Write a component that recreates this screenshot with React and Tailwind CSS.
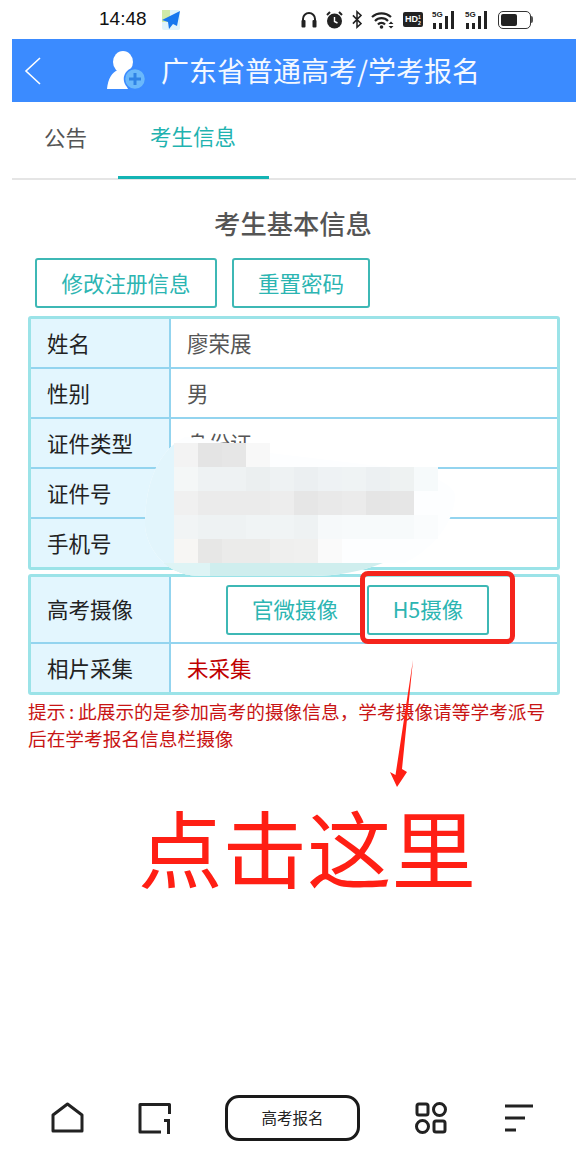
import React from "react";

const infoRows = [
  { label: "姓名", value: "廖荣展" },
  { label: "性别", value: "男" },
  { label: "证件类型", value: "身份证" },
  { label: "证件号", value: "" },
  { label: "手机号", value: "" },
];

const tip = "提示\u2009:\u2009此展示的是参加高考的摄像信息\uFF0C学考摄像请等学考派号后在学考报名信息栏摄像";

// mosaic cells of the censored area, 24px each, 11 columns
const mosaic = [
  ["bg-[#f3f3f3]", "bg-[#e4e4e4]", "bg-[#e6e6e6]", "bg-[#f8f8f8]", "", "", "", "", "", "", ""],
  ["bg-[#f4f7f7]", "bg-[#eef2f3]", "bg-[#eef2f3]", "bg-[#ebeff0]", "bg-[#eef2f3]", "bg-[#ebeff1]", "bg-[#eef2f4]", "bg-[#eff3f4]", "bg-[#ecf0f2]", "bg-[#eef2f2]", "bg-[#f6fafb]"],
  ["bg-[#f0f0f0]", "bg-[#ebebeb]", "bg-[#ebebeb]", "bg-[#ebebeb]", "bg-[#ededed]", "bg-[#e6e6e6]", "bg-[#e9e9e9]", "bg-[#ebebeb]", "bg-[#e5e5e5]", "bg-[#e6e6e6]", ""],
  ["bg-[#f1f4f5]", "bg-[#eef2f3]", "bg-[#eef2f3]", "bg-[#f0f4f5]", "bg-[#f0f4f5]", "bg-[#eef2f3]", "bg-[#f6f9fa]", "bg-[#f7fafb]", "bg-[#f7fafb]", "bg-[#f7fafb]", "bg-[#fafcfd]"],
  ["bg-[#f7f6f4]", "bg-[#e7e7e6]", "bg-[#ebebea]", "bg-[#ebebea]", "bg-[#efefee]", "bg-[#f0f0ef]", "bg-[#fafafa]", "", "", "", ""],
];

const font = "font-['Noto_Sans_CJK_SC','Noto_Sans',sans-serif]";

function Row({ label, children, className = "h-[50px]", last }) {
  return (
    <div className={`flex ${className} ${last ? "" : "border-b-2 border-[#93d4ef]"}`}>
      <div className="w-[140px] shrink-0 flex items-center pl-[16px] bg-[#e3f6fe] border-r-2 border-[#93d4ef] text-[#222] text-[21.5px]">
        {label}
      </div>
      <div className="flex-1 flex items-center pl-[16px] text-[#555] text-[21.5px]">{children}</div>
    </div>
  );
}

function StatusBar() {
  return (
    <div className="h-[39px] shrink-0 flex items-center pl-[99px] pr-[51px]">
      <span className="font-['Liberation_Sans',sans-serif] text-[19px] text-[#111]">14:48</span>
      <svg className="ml-[14px]" width="20" height="22" viewBox="0 0 20 22">
        <rect x="1" y="1" width="18" height="20" rx="2" fill="#dff3fb" />
        <rect x="1" y="1" width="8" height="12" fill="#cfeaa8" />
        <path d="M19 2 1 11l6 2 1 7 4-5 4 2z" fill="#1677ee" />
      </svg>
      <div className="ml-auto flex items-center gap-[9px] text-[#222]">
        <svg width="16" height="17" viewBox="0 0 16 17" fill="none" stroke="#222" strokeWidth="2">
          <path d="M2 13V8a6 6 0 0 1 12 0v5" />
          <rect x="0.500" y="9" width="4" height="7.500" rx="1" fill="#222" strokeWidth="0" />
          <rect x="11.500" y="9" width="4" height="7.500" rx="1" fill="#222" strokeWidth="0" />
        </svg>
        <svg width="17" height="19" viewBox="0 0 17 19">
          <circle cx="8.500" cy="11" r="7.500" fill="#222" />
          <path d="M8.500 7v4.500l3 1.500" stroke="#fff" strokeWidth="1.400" fill="none" />
          <path d="M1 5l3-3M16 5l-3-3" stroke="#222" strokeWidth="2" />
        </svg>
        <svg width="10" height="19" viewBox="0 0 11 19" fill="none" stroke="#222" strokeWidth="1.700">
          <path d="M1 5l9 9-4.500 4V1L10 5l-9 9" />
        </svg>
        <svg width="23" height="18" viewBox="0 0 23 18" fill="none" stroke="#222" strokeWidth="2.200">
          <path d="M1 6a14 14 0 0 1 19 0M4 10a9 9 0 0 1 13 0M7 13.500a4.500 4.500 0 0 1 7 0" />
          <circle cx="10.500" cy="16" r="1.800" fill="#222" stroke="none" />
          <path d="M20 10.500l-2.500 2.500h5zM20 17.500l-2.500-2.500h5z" fill="#222" stroke="none" />
        </svg>
        <div className="w-[20px] h-[15px] bg-[#222] rounded-[2px] text-white font-bold font-['Liberation_Sans',sans-serif] flex items-center justify-center">
          <span className="text-[9px] leading-none">HD</span>
          <span className="text-[5px] leading-[6px] w-[3px]">1 2</span>
        </div>
        {[0, 1].map((i) => (
          <div key={i} className="relative w-[24px] h-[18px] flex items-end gap-[2px] pl-[1px]">
            <span className="absolute left-0 top-[-1px] text-[8px] font-bold leading-[9px] font-['Liberation_Sans',sans-serif]">5G</span>
            <div className="w-[3px] h-[6px] bg-[#222]" />
            <div className="w-[3px] h-[6px] bg-[#222] ml-[1px]" />
            <div className="w-[3px] h-[13px] bg-[#222] ml-[1px]" />
            <div className="w-[3px] h-[18px] bg-[#222] ml-[1px]" />
          </div>
        ))}
        <div className="flex items-center">
          <div className="w-[33px] h-[18px] border-[1.5px] border-[#333] rounded-[5px] p-[2px]">
            <div className="w-[16px] h-full bg-[#222] rounded-[2px]" />
          </div>
          <div className="w-[2px] h-[7px] bg-[#555] rounded-r" />
        </div>
      </div>
    </div>
  );
}

function OutlineButton({ children, className = "" }) {
  return (
    <button className={`h-[50px] border-2 border-[#3eb8b5] rounded-[3px] bg-white text-[#2cb5b2] text-[21.5px] flex items-center justify-center ${className}`}>
      {children}
    </button>
  );
}

export default function App() {
  return (
    <div className={`relative w-[584px] h-[1149px] bg-white overflow-hidden flex flex-col ${font}`}>
      <StatusBar />

      <div className="mx-[12px] w-[564px] h-[63px] shrink-0 bg-[#3b8bff] flex items-center text-white">
        <svg className="ml-[11px]" width="20" height="30" viewBox="0 0 20 30" fill="none" stroke="#fff" strokeWidth="1.600">
          <path d="M17 2 3 15l14 13" />
        </svg>
        <svg className="ml-[64px]" width="40" height="40" viewBox="0 0 40 40">
          <ellipse cx="16" cy="11" rx="10" ry="11" fill="#fff" />
          <path d="M0 38c1-10 5-17 11-19l13 3c-5 5-6 11-3 16z" fill="#fff" />
          <circle cx="28" cy="28" r="10.500" fill="#6ab8fb" stroke="#3b8bff" strokeWidth="1.500" />
          <path d="M28 22v12M22 28h12" stroke="#2f83e6" strokeWidth="3" />
        </svg>
        <span className="ml-[14px] mb-[2px] text-[28px] leading-none text-[#f4f8ff]">广东省普通高考/学考报名</span>
      </div>

      <div className="mx-[12px] w-[564px] h-[78px] shrink-0 flex border-b-2 border-[#e5e5e5] text-[21.5px]">
        <div className="pl-[32px] w-[106px] flex items-center pb-[6px] text-[#555]">公告</div>
        <div className="w-[151px] flex items-center justify-center pb-[6px] pr-[1px] text-[#1fb3b0] border-b-[3px] border-[#14b4b4] mb-[-1px]">
          考生信息
        </div>
      </div>

      <h1 className="mt-[24px] w-[586px] text-center text-[26.300px] leading-[38px] font-medium text-[#555]">考生基本信息</h1>

      <div className="mt-[16px] ml-[35px] flex gap-[15px]">
        <OutlineButton className="w-[182px]">修改注册信息</OutlineButton>
        <OutlineButton className="w-[138px]">重置密码</OutlineButton>
      </div>

      <div className="mt-[8px] ml-[28px] w-[532px] border-[3px] border-[#9be3e8] rounded-[3px]">
        {infoRows.map((r, i) => (
          <Row key={r.label} label={r.label} last={i === infoRows.length - 1} className={i === infoRows.length - 1 ? "h-[48px]" : "h-[50px]"}>
            {r.value}
          </Row>
        ))}
      </div>

      <div className="mt-[4px] ml-[28px] w-[532px] border-[3px] border-[#9be3e8] rounded-[3px]">
        <Row label="高考摄像" className="h-[67px]">
          <div className="flex ml-[39px] gap-[3px]">
            <OutlineButton className="w-[138px] border-[#3eb8a8]">官微摄像</OutlineButton>
            <OutlineButton className="w-[122px]">H5摄像</OutlineButton>
          </div>
        </Row>
        <Row label="相片采集" className="h-[48px]" last>
          <span className="text-[#c00000]">未采集</span>
        </Row>
      </div>

      <p className="mt-[2px] ml-[28px] w-[525px] text-[18.700px] leading-[27px] text-[#c81414]">{tip}</p>

      <div className="mt-auto mb-[9px] h-[45px] flex items-center pl-[51px]">
        <svg width="33" height="31" viewBox="0 0 33 31" fill="none" stroke="#222" strokeWidth="3" strokeLinejoin="round">
          <path d="M2 13 16.500 2 31 13v16H2z" />
        </svg>
        <svg className="ml-[54px]" width="33" height="32" viewBox="0 0 33 32" fill="none" stroke="#222" strokeWidth="3" strokeLinejoin="round">
          <path d="M31.500 12V2.500H2v27.500h21" />
          <path d="M26 18.500h4.500V32" strokeLinejoin="miter" />
        </svg>
        <div className="ml-[54px] w-[135px] h-[46px] border-[3px] border-[#1a1a1a] rounded-[14px] flex items-center justify-center text-[15.500px] text-[#222]">
          高考报名
        </div>
        <svg className="ml-[55px]" width="32" height="32" viewBox="0 0 32 32" fill="none" stroke="#222" strokeWidth="3">
          <rect x="2" y="2" width="11" height="11" rx="2" />
          <circle cx="24.500" cy="7.500" r="6" />
          <circle cx="7.500" cy="24.500" r="6" />
          <rect x="19" y="19" width="11" height="11" rx="2" />
        </svg>
        <svg className="ml-[58px]" width="28" height="30" viewBox="0 0 28 30" fill="none" stroke="#222" strokeWidth="3">
          <path d="M0 3h28M0 15h20M0 27h11" />
        </svg>
      </div>

      {/* censoring blob painted over the screenshot */}
      <svg className="absolute left-[140px] top-[430px]" width="320" height="150" viewBox="0 0 320 150">
        <defs>
          <clipPath id="blob">
            <path d="M45 7C75 7 100 20 130 23L230 35C285 38 315 55 315 65C315 95 290 120 265 133L243 133Q210 146 170 146L60 146C20 146 5 110 5 95C5 70 10 25 45 7Z" />
          </clipPath>
        </defs>
        <g clipPath="url(#blob)">
          <rect width="320" height="150" fill="#fdfeff" />
          <rect width="34" height="150" fill="#e2f5fc" />
          <rect x="0" y="133" width="320" height="17" fill="#cfeeee" />
          <rect x="0" y="133" width="70" height="17" fill="#def4f5" />
        </g>
      </svg>
      <div className="absolute left-[174px] top-[443px] grid grid-cols-[repeat(11,24px)] auto-rows-[24px]">
        {mosaic.flat().map((c, i) => (
          <div key={i} className={c} />
        ))}
      </div>

      {/* red annotation */}
      <div className="absolute left-[360px] top-[571px] w-[155px] h-[73px] border-[5px] border-[#f5241c] rounded-[8px]" />
      <svg className="absolute left-[385px] top-[655px]" width="32" height="136" viewBox="0 0 32 136">
        <path d="M28 5 17 114l5 3-10 15-7-15 5.500 3z" fill="#ff1f14" />
      </svg>
      <div className="absolute left-[138px] top-[785px] text-[84.500px] leading-[120px] text-[#ff1f14] whitespace-nowrap">
        点击这里
      </div>
    </div>
  );
}
